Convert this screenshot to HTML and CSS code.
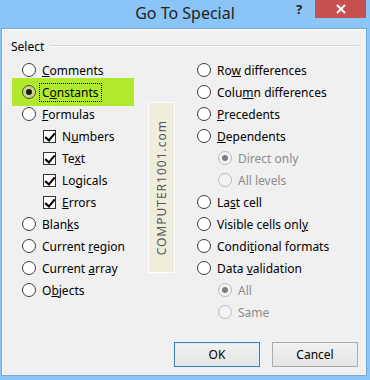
FILE: index.html
```html
<!DOCTYPE html>
<html lang="en">
<head>
    <meta charset="UTF-8">
    <title>Go To Special</title>
    <link rel="stylesheet" href="styles.css">
</head>
<body>
    <div class="window">
        <div class="titlebar">
            <span class="title">Go To Special</span>
            <span class="help">?</span>
            <span class="close">
                <svg width="10" height="10" viewBox="0 0 10 10"><path d="M1 1 L9 9 M9 1 L1 9" stroke="#fff" stroke-width="2"/></svg>
            </span>
        </div>

        <div class="client">
            <div class="group-head">
                <span>Select</span>
                <span class="rule"></span>
            </div>

            <div class="columns">
                <div class="col">
                    <div class="opt"><span class="radio"></span><span><u>C</u>omments</span></div>
                    <div class="opt selected"><span class="radio checked"></span><span class="focus">C<u>o</u>nstants</span></div>
                    <div class="opt"><span class="radio"></span><span><u>F</u>ormulas</span></div>
                    <div class="opt sub"><span class="check"></span><span>N<u>u</u>mbers</span></div>
                    <div class="opt sub"><span class="check"></span><span>Te<u>x</u>t</span></div>
                    <div class="opt sub"><span class="check"></span><span>Lo<u>g</u>icals</span></div>
                    <div class="opt sub"><span class="check"></span><span><u>E</u>rrors</span></div>
                    <div class="opt"><span class="radio"></span><span>Blan<u>k</u>s</span></div>
                    <div class="opt"><span class="radio"></span><span>Current <u>r</u>egion</span></div>
                    <div class="opt"><span class="radio"></span><span>Current <u>a</u>rray</span></div>
                    <div class="opt"><span class="radio"></span><span>O<u>b</u>jects</span></div>
                </div>
                <div class="col">
                    <div class="opt"><span class="radio"></span><span>Ro<u>w</u> differences</span></div>
                    <div class="opt"><span class="radio"></span><span>Colu<u>m</u>n differences</span></div>
                    <div class="opt"><span class="radio"></span><span><u>P</u>recedents</span></div>
                    <div class="opt"><span class="radio"></span><span><u>D</u>ependents</span></div>
                    <div class="opt sub disabled"><span class="radio checked"></span><span>Direct only</span></div>
                    <div class="opt sub disabled"><span class="radio"></span><span>All levels</span></div>
                    <div class="opt"><span class="radio"></span><span>La<u>s</u>t cell</span></div>
                    <div class="opt"><span class="radio"></span><span>Visible cells onl<u>y</u></span></div>
                    <div class="opt"><span class="radio"></span><span>Condi<u>t</u>ional formats</span></div>
                    <div class="opt"><span class="radio"></span><span>Data <u>v</u>alidation</span></div>
                    <div class="opt sub disabled"><span class="radio checked"></span><span>All</span></div>
                    <div class="opt sub disabled"><span class="radio"></span><span>Same</span></div>
                </div>
            </div>

            <div class="buttons">
                <button class="btn default">OK</button>
                <button class="btn">Cancel</button>
            </div>

            <div class="watermark"><span>COMPUTER1001.com</span></div>
        </div>
    </div>
</body>
</html>
```

FILE: styles.css
```css
* {
    margin: 0;
    padding: 0;
    box-sizing: border-box;
}

body {
    font-family: 'Noto Sans', 'Open Sans', sans-serif;
    font-size: 12px;
    color: #000;
    background: #8bc4f7;
}

.window {
    width: 370px;
    height: 380px;
    background: #8bc4f7;
    display: flex;
    flex-direction: column;
}

/* title bar */
.titlebar {
    height: 29px;
    position: relative;
    display: flex;
    justify-content: center;
}

.title {
    font-size: 16px;
    line-height: 27px;
    color: #222;
}

.help {
    position: absolute;
    left: 296px;
    top: 0;
    font-size: 13px;
    font-weight: bold;
    line-height: 18px;
    color: #222;
}

.close {
    position: absolute;
    left: 315px;
    top: 0;
    width: 51px;
    height: 18px;
    background: #c75050;
    display: flex;
    align-items: center;
    justify-content: center;
}

/* dialog body */
.client {
    position: relative;
    margin: 0 4px 5px 2px;
    flex: 1;
    background: #f0f0f0;
    border-top: 1px solid #fff;
    border-left: 1px solid #fff;
    box-shadow: 0 0 0 1px #76a9d8;
    padding: 8px;
    display: flex;
    flex-direction: column;
}

.group-head {
    display: flex;
    align-items: center;
    height: 16px;
    margin-bottom: 5px;
}

.rule {
    flex: 1;
    height: 2px;
    margin-left: 6px;
    margin-right: -1px;
    border-top: 1px solid #d5d5d5;
    border-bottom: 1px solid #fbfbfb;
}

.columns {
    display: grid;
    grid-template-columns: 175px 1fr;
    padding-left: 11px;
}

.opt {
    height: 22px;
    display: flex;
    align-items: center;
    position: relative;
    white-space: nowrap;
}

.opt > span:last-child {
    margin-left: 6px;
}

.opt.sub {
    padding-left: 21px;
}

.opt.disabled {
    color: #8d8d8d;
}

.opt.selected::before {
    content: "";
    position: absolute;
    left: -10px;
    top: -3px;
    width: 122px;
    height: 28px;
    background: #b1ea2c;
}

.radio {
    position: relative;
    width: 14px;
    height: 14px;
    border-radius: 50%;
    border: 1px solid #3c3c3c;
    background: #fff;
    flex: none;
}

.radio.checked::after {
    content: "";
    position: absolute;
    left: 3px;
    top: 3px;
    width: 6px;
    height: 6px;
    border-radius: 50%;
    background: #1b1b1b;
}

.selected .radio {
    border-color: #4a4a2a;
    background: #c8d88a;
}

.disabled .radio {
    border-color: #bcbcbc;
    background: #f4f4f4;
}

.disabled .radio.checked::after {
    background: #7d7d7d;
}

.focus {
    position: relative;
    margin-left: 3px !important;
    padding: 0 2px;
    line-height: 17px;
    border: 1px dotted #000;
}

.check {
    position: relative;
    width: 13px;
    height: 13px;
    border: 1px solid #333;
    background: #fff;
    flex: none;
}

.check::after {
    content: "";
    position: absolute;
    left: 3px;
    top: 0;
    width: 4px;
    height: 8px;
    border-right: 2px solid #000;
    border-bottom: 2px solid #000;
    transform: rotate(40deg);
}

/* buttons */
.buttons {
    margin-top: auto;
    display: flex;
    justify-content: flex-end;
    gap: 12px;
}

.btn {
    width: 86px;
    height: 25px;
    font-family: inherit;
    font-size: 12px;
    color: #000;
    background: linear-gradient(#f0f0f0, #e5e5e5);
    border: 1px solid #acacac;
}

.btn.default {
    border-color: #3c7fb1;
    box-shadow: inset 0 0 0 1px #d8ecfa;
}

/* site watermark */
.watermark {
    position: absolute;
    left: 145px;
    top: 72px;
    width: 27px;
    height: 171px;
    background: #efeedc;
    border: 1px solid #fff;
    display: flex;
    align-items: center;
    justify-content: center;
}

.watermark span {
    writing-mode: vertical-rl;
    transform: rotate(180deg);
    font-size: 12px;
    letter-spacing: 1px;
    color: #575757;
}
```
